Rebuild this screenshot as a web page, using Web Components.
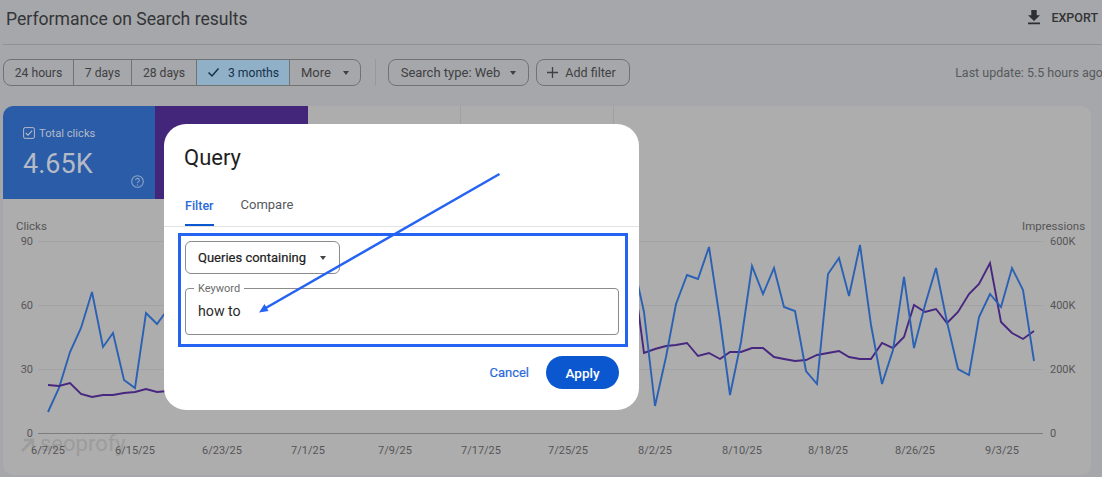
<!DOCTYPE html>
<html lang="en">
<head>
<meta charset="utf-8">
<title>Performance on Search results</title>
<style>
  html, body { margin: 0; height: 100%; background: #a5a7aa; overflow: hidden; }
  body { font-family: Roboto, "Liberation Sans", sans-serif; }
</style>
</head>
<body>
<search-performance>
  <report-header slot="header">Performance on Search results</report-header>
  <report-toolbar slot="toolbar"></report-toolbar>
  <report-card slot="card">
    <metric-tile slot="tiles" tone="blue" label="Total clicks" value="4.65K"></metric-tile>
    <metric-tile slot="tiles" tone="purple"></metric-tile>
    <metric-tile slot="tiles" tone="empty"></metric-tile>
    <metric-tile slot="tiles" tone="empty"></metric-tile>
    <trend-chart slot="chart"></trend-chart>
  </report-card>
</search-performance>
<query-dialog></query-dialog>

<script>
class SearchPerformance extends HTMLElement {
  constructor() {
    super();
    this.attachShadow({ mode: 'open' });
    this.shadowRoot.innerHTML = `
      <style>
        :host {
          display: flex;
          flex-direction: column;
          width: 1102px;
          height: 477px;
          overflow: hidden;
          box-sizing: border-box;
          padding-left: 3px;
          color: #3c3d3f;
        }
      </style>
      <slot name="header"></slot>
      <slot name="toolbar"></slot>
      <slot name="card"></slot>
    `;
  }
}

class ReportHeader extends HTMLElement {
  constructor() {
    super();
    this.attachShadow({ mode: 'open' });
    this.shadowRoot.innerHTML = `
      <style>
        :host {
          display: flex;
          align-items: center;
          justify-content: space-between;
          height: 45px;
          box-sizing: border-box;
          padding: 0 4px 7px 3px;
          border-bottom: 1px solid #8f9194;
        }
        .title { font-size: 17.600px; color: #343537; }
        .export {
          display: flex;
          align-items: center;
          gap: 10px;
          font-size: 12.500px;
          font-weight: 500;
          color: #333436;
          margin-top: -3px;
        }
        svg { display: block; margin-left: -2px; }
      </style>
      <div class="title"><slot></slot></div>
      <div class="export">
        <svg width="14" height="16" viewBox="0 0 14 16"><path d="M4.300 1h5.400v5.300H13L7 12 1 6.300h3.300zM1 13.500h12V15.200H1z" fill="#2e2f31"/></svg>
        <span>EXPORT</span>
      </div>
    `;
  }
}

class ReportToolbar extends HTMLElement {
  constructor() {
    super();
    this.attachShadow({ mode: 'open' });
    this.shadowRoot.innerHTML = `
      <style>
        :host {
          display: flex;
          align-items: center;
          height: 27px;
          margin-top: 14px;
          font-size: 13px;
          color: #3f4042;
        }
        .group, .chip {
          display: flex;
          height: 27px;
          box-sizing: border-box;
          border: 1px solid #707274;
          border-radius: 8px;
        }
        .group { width: 358px; overflow: hidden; font-size: 12.200px; }
        .seg {
          display: flex;
          align-items: center;
          justify-content: center;
          box-sizing: border-box;
          border-right: 1px solid #707274;
        }
        .seg:last-child { border-right: 0; }
        .seg.on { background: #8fb0c6; color: #17304c; gap: 8px; }
        .rule { width: 1px; height: 27px; background: #97999c; margin: 0 12px 0 14px; }
        .chip { align-items: center; justify-content: center; gap: 8px; }
        .spacer { flex: 1; }
        .updated { font-size: 12.500px; color: #57595c; white-space: nowrap; margin-right: -1px; }
        .caret { width: 0; height: 0; border: 3.500px solid transparent; border-top: 4px solid #3f4042; border-bottom: 0; }
        svg { display: block; }
      </style>
      <div class="group">
        <div class="seg" style="width:70px">24 hours</div>
        <div class="seg" style="width:58px">7 days</div>
        <div class="seg" style="width:65px">28 days</div>
        <div class="seg on" style="width:93px">
          <svg width="13" height="11" viewBox="0 0 13 11"><path d="M1.500 5.500 5 9l6.500-7.500" fill="none" stroke="#17304c" stroke-width="1.500"/></svg>
          3 months
        </div>
        <div class="seg" style="flex:1;gap:12px;font-size:13px">More <span class="caret"></span></div>
      </div>
      <div class="rule"></div>
      <div class="chip" style="width:141px">Search type: Web <span class="caret" style="margin-left:2px"></span></div>
      <div class="chip" style="width:94px;margin-left:7px;font-size:12.500px;gap:7px;padding-right:3px">
        <svg width="11" height="11" viewBox="0 0 11 11"><path d="M5.500 0v11M0 5.500h11" stroke="#3f4042" stroke-width="1.300"/></svg>
        Add filter
      </div>
      <div class="spacer"></div>
      <div class="updated">Last update: 5.5 hours ago</div>
    `;
  }
}

class ReportCard extends HTMLElement {
  constructor() {
    super();
    this.attachShadow({ mode: 'open' });
    this.shadowRoot.innerHTML = `
      <style>
        :host {
          display: block;
          width: 1088px;
          height: 369px;
          margin-top: 20px;
          background: #adadad;
          border-radius: 10px;
          overflow: hidden;
        }
        .tiles { display: grid; grid-template-columns: 152px 153px 153px 153px; height: 93px; }
      </style>
      <div class="tiles"><slot name="tiles"></slot></div>
      <slot name="chart"></slot>
    `;
  }
}

class MetricTile extends HTMLElement {
  constructor() {
    super();
    this.attachShadow({ mode: 'open' });
    const label = this.getAttribute('label');
    const value = this.getAttribute('value');
    this.shadowRoot.innerHTML = `
      <style>
        :host { display: block; box-sizing: border-box; position: relative; }
        :host([tone="blue"]) { background: #2b5ca8; }
        :host([tone="purple"]) { background: #43257a; }
        :host([tone="empty"]) { border-right: 1px solid #a0a0a0; }
        .inner { padding: 20px 0 0 20px; color: #b4bac6; }
        .label { display: flex; align-items: center; gap: 4px; font-size: 11.200px; height: 14px; }
        .value { font-size: 27px; line-height: 34px; margin-top: 7px; }
        .help { position: absolute; right: 11px; bottom: 11px; display: block; }
        svg { display: block; }
      </style>
      ${label ? `
      <div class="inner">
        <div class="label">
          <svg width="12" height="12" viewBox="0 0 12 12"><rect x=".6" y=".6" width="10.800" height="10.800" rx="1.500" fill="none" stroke="#b4bac6" stroke-width="1"/><path d="M2.800 6 5 8.200l4.200-4.600" fill="none" stroke="#b4bac6" stroke-width="1.100"/></svg>
          <span>${label}</span>
        </div>
        <div class="value">${value}</div>
      </div>
      <svg class="help" width="13" height="13" viewBox="0 0 13 13"><circle cx="6.500" cy="6.500" r="5.800" fill="none" stroke="#8ea4c8" stroke-width="1.100"/><path d="M4.700 5.200a1.800 1.800 0 1 1 2.900 1.400c-.7.500-1.100.8-1.100 1.600" fill="none" stroke="#8ea4c8" stroke-width="1.100"/><circle cx="6.500" cy="9.900" r=".7" fill="#8ea4c8"/></svg>` : ''}
    `;
  }
}

class TrendChart extends HTMLElement {
  constructor() {
    super();
    this.attachShadow({ mode: 'open' });
    const line = (pts, color) =>
      `<polyline points="${pts.map(p => p.join(',')).join(' ')}" fill="none" stroke="${color}" stroke-width="1.900" stroke-linejoin="miter"/>`;

    // numbers read off the reference, in page coordinates
    const blueLeft = [[48,412],[59,388],[70,352],[81,328],[92,292],[103,347],[113,333],[124,380],[135,388],[146,313],[157,324],[168,309]];
    const purpleLeft = [[48,385],[59,386],[70,383],[81,394],[92,397],[103,395],[113,395],[124,393],[135,392],[146,389],[157,392],[168,391]];
    const blueRight = [[633,262],[644,312],[655,406],[666,357],[676,304],[687,275],[698,279],[709,247],[720,320],[730,395],[741,342],[752,266],[763,294],[774,268],[784,307],[795,311],[806,371],[817,384],[828,274],[839,258],[849,296],[860,245],[871,325],[882,384],[893,350],[904,277],[914,348],[925,305],[936,268],[947,322],[958,369],[969,375],[979,317],[990,294],[1001,307],[1012,268],[1023,290],[1034,361]];
    const purpleRight = [[633,270],[644,353],[655,349],[666,346],[676,345],[687,343],[698,356],[709,353],[720,359],[730,352],[741,352],[752,348],[763,348],[774,357],[784,359],[795,361],[806,360],[817,355],[828,353],[839,351],[849,357],[860,359],[871,359],[882,343],[893,348],[904,337],[914,305],[925,312],[936,309],[947,323],[958,312],[969,294],[979,284],[990,263],[1001,322],[1012,333],[1023,339],[1034,331]];

    const dates = [[48,'6/7/25'],[135,'6/15/25'],[222,'6/23/25'],[308,'7/1/25'],[395,'7/9/25'],[481,'7/17/25'],[568,'7/25/25'],[655,'8/2/25'],[742,'8/10/25'],[828,'8/18/25'],[915,'8/26/25'],[1002,'9/3/25']];
    const rows = [[241,'90','600K'],[305,'60','400K'],[369,'30','200K'],[433,'0','0']];

    this.shadowRoot.innerHTML = `
      <style>
        :host { display: block; height: 276px; }
        svg { display: block; }
        text { font-family: Roboto, "Liberation Sans", sans-serif; font-size: 11px; fill: #555557; }
        text.mark { font-size: 22px; fill: #9c9c9c; }
      </style>
      <svg width="1088" height="276" viewBox="3 199 1088 276">
        ${rows.map(r => `<line x1="38" x2="1043" y1="${r[0] + .5}" y2="${r[0] + .5}" stroke="${r[1] === '0' ? '#7d7d7d' : '#a3a3a3'}"/>`).join('')}
        <path d="M22 451 32 441M24 440H33V449" fill="none" stroke="#9c9c9c" stroke-width="2.500"/>
        <text class="mark" x="40" y="451">seoprofy</text>
        ${line(blueLeft, '#2b61b4')}
        ${line(purpleLeft, '#47277f')}
        ${line(purpleRight, '#47277f')}
        ${line(blueRight, '#2b61b4')}
        <text x="16" y="230" style="font-size:11.500px">Clicks</text>
        <text x="1022" y="230" style="font-size:11.500px">Impressions</text>
        ${rows.map(r => `<text x="33" y="${r[0] + 4}" text-anchor="end">${r[1]}</text><text x="1050" y="${r[0] + 4}">${r[2]}</text>`).join('')}
        ${dates.map(d => `<text x="${d[0]}" y="454" text-anchor="middle">${d[1]}</text>`).join('')}
      </svg>
    `;
  }
}

class QueryDialog extends HTMLElement {
  constructor() {
    super();
    this.attachShadow({ mode: 'open' });
    this.shadowRoot.innerHTML = `
      <style>
        :host {
          position: absolute;
          left: 164px;
          top: 124px;
          width: 475px;
          height: 286px;
          box-sizing: border-box;
          background: #fff;
          border-radius: 22px;
          color: #1f1f1f;
          font-family: Roboto, "Liberation Sans", sans-serif;
        }
        h2 { margin: 0; padding: 20px 20px 0; font-size: 22px; line-height: 28px; font-weight: 400; }
        .tabs {
          display: flex;
          gap: 27px;
          height: 45px;
          margin-top: 10px;
          padding: 0 21px;
          box-sizing: border-box;
          border-bottom: 1px solid #e3e3e3;
          font-size: 13px;
          color: #55585c;
        }
        .tab { padding-top: 15px; height: 44px; box-sizing: border-box; }
        .tab.on { color: #2a6ad9; font-weight: 500; font-size: 12.500px; padding-top: 16px; border-bottom: 2.500px solid #0b57d0; }
        .body { padding: 14px 20px 0 21px; }
        .select {
          display: flex;
          align-items: center;
          justify-content: space-between;
          width: 155px;
          height: 33px;
          box-sizing: border-box;
          padding: 0 13px 0 12px;
          border: 1px solid #8b8b8b;
          border-radius: 6px;
          font-size: 13px;
          color: #222;
          -webkit-text-stroke: .2px #222;
        }
        .caret { width: 0; height: 0; border: 3.500px solid transparent; border-top: 4px solid #444; border-bottom: 0; }
        .field {
          position: relative;
          height: 47px;
          margin-top: 14px;
          box-sizing: border-box;
          padding: 13px 12px 0;
          border: 1px solid #8b8b8b;
          border-radius: 4px;
          font-size: 14.200px;
          line-height: 18px;
          color: #2b2b2b;
        }
        .legend {
          position: absolute;
          left: 8px;
          top: -7px;
          padding: 0 4px;
          background: #fff;
          font-size: 11px;
          line-height: 13px;
          color: #6b6b6b;
        }
        .actions {
          display: flex;
          justify-content: flex-end;
          align-items: center;
          gap: 17px;
          margin-top: 21px;
          font-size: 13px;
        }
        .cancel { color: #2a6ad9; -webkit-text-stroke: .2px #2a6ad9; }
        .apply {
          display: flex;
          align-items: center;
          justify-content: center;
          width: 73px;
          height: 33px;
          border-radius: 17px;
          background: #0b57d0;
          color: #fff;
          font-weight: 500;
          font-size: 13.500px;
        }
        /* annotation drawn on top of the screenshot */
        .note { position: absolute; left: 0; top: 0; pointer-events: none; }
      </style>
      <h2>Query</h2>
      <div class="tabs">
        <div class="tab on">Filter</div>
        <div class="tab">Compare</div>
      </div>
      <div class="body">
        <div class="select">Queries containing <span class="caret"></span></div>
        <div class="field">
          <span class="legend">Keyword</span>
          how to
        </div>
        <div class="actions">
          <span class="cancel">Cancel</span>
          <span class="apply">Apply</span>
        </div>
      </div>
      <svg class="note" width="475" height="286" viewBox="164 124 475 286">
        <rect x="179.500" y="234.500" width="447" height="111" fill="none" stroke="#2563f2" stroke-width="3"/>
        <line x1="499.500" y1="174" x2="264" y2="309" stroke="#2563f2" stroke-width="2.500"/>
        <path d="M259 312.500 268.500 311 264.500 304z" fill="#2563f2"/>
      </svg>
    `;
  }
}

customElements.define('search-performance', SearchPerformance);
customElements.define('report-header', ReportHeader);
customElements.define('report-toolbar', ReportToolbar);
customElements.define('report-card', ReportCard);
customElements.define('metric-tile', MetricTile);
customElements.define('trend-chart', TrendChart);
customElements.define('query-dialog', QueryDialog);
</script>
</body>
</html>
